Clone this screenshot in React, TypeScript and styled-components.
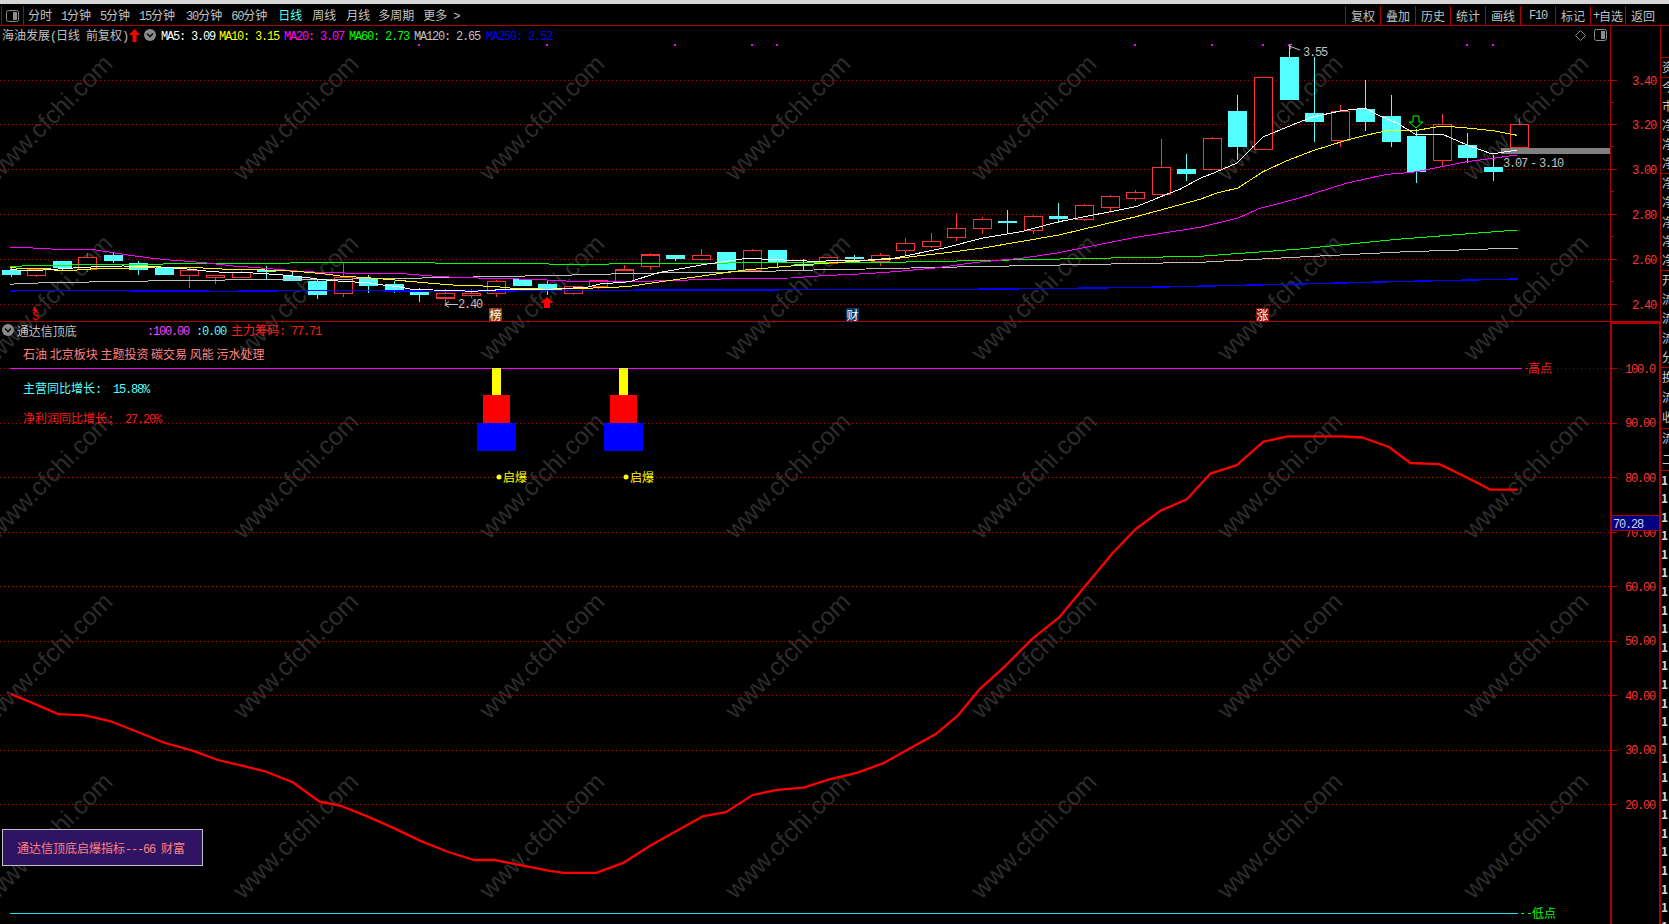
import React from "react";
import styled, { createGlobalStyle } from "styled-components";

const Global = createGlobalStyle`
  html, body { margin: 0; padding: 0; background: #000; }
  body { font-family: "Noto Sans CJK SC", "Liberation Sans", sans-serif; font-size: 12px; }
`;

const RED_LINE = "#b00000";
const UP = "#ff3232";
const DOWN = "#54ffff";

const Page = styled.div`
  width: 1669px;
  height: 924px;
  background: #000;
  overflow: hidden;
  display: flex;
  flex-direction: column;
`;
const WindowEdge = styled.div`
  height: 4px;
  flex: none;
  background: #d6d6d6;
`;
const Toolbar = styled.div`
  height: 21px;
  flex: none;
  display: flex;
  align-items: center;
  border-bottom: 1px solid ${RED_LINE};
  color: #c0c0c0;
`;
const ToggleCell = styled.div`
  align-self: stretch;
  margin: 2px 0 0 1px;
  width: 21px;
  flex: none;
  border-left: 1px solid ${RED_LINE};
  border-right: 1px solid ${RED_LINE};
  display: flex;
  align-items: center;
  justify-content: center;
`;
const Period = styled.span<{ $ml: number; $active?: boolean }>`
  margin-left: ${(p) => p.$ml}px;
  white-space: nowrap;
  color: ${(p) => (p.$active ? DOWN : "#c0c0c0")};
`;
const ToolGroup = styled.div`
  margin-left: auto;
  padding-right: 9px;
  display: flex;
  align-self: stretch;
`;
const ToolButton = styled.div`
  width: 35px;
  box-sizing: border-box;
  margin-top: 2px;
  border-left: 1px solid ${RED_LINE};
  display: flex;
  align-items: center;
  justify-content: center;
  white-space: nowrap;
`;
const Body = styled.div`
  flex: 1;
  min-height: 0;
  display: flex;
`;
const Panes = styled.div`
  width: 1661px;
  flex: none;
  display: flex;
  flex-direction: column;
`;
const PriceRow = styled.div`
  height: 296px;
  flex: none;
  display: flex;
  border-bottom: 1px solid ${RED_LINE};
  box-sizing: border-box;
`;
const IndicatorRow = styled.div`
  flex: 1;
  min-height: 0;
  display: flex;
`;
const ChartPane = styled.div`
  position: relative;
  width: 1610px;
  flex: none;
  overflow: hidden;
`;
const ChartSvg = styled.svg`
  display: block;
  width: 1610px;
  height: 100%;
`;
const Axis = styled.div<{ $heavy?: boolean }>`
  position: relative;
  flex: 1;
  box-sizing: border-box;
  border-left: ${(p) => (p.$heavy ? 2 : 1)}px solid ${RED_LINE};
  border-right: ${(p) => (p.$heavy ? 2 : 1)}px solid ${RED_LINE};
  border-top: ${(p) => (p.$heavy ? `2px solid ${RED_LINE}` : "none")};
`;
const AxisSvg = styled.svg`
  position: absolute;
  left: 0;
  top: 0;
  width: 8px;
  height: 100%;
`;
const AxisValue = styled.span<{ $top: number }>`
  position: absolute;
  right: 4px;
  top: ${(p) => p.$top}px;
  transform: translateY(-50%);
  color: ${UP};
  line-height: 14px;
`;
const LastValue = styled.div<{ $top: number }>`
  position: absolute;
  left: 0;
  right: 0;
  top: ${(p) => p.$top}px;
  height: 16px;
  box-sizing: border-box;
  background: #000080;
  border-top: 1px solid ${RED_LINE};
  border-bottom: 1px solid ${RED_LINE};
  color: #d0d0e8;
  line-height: 14px;
  padding-left: 1px;
`;
const Strip = styled.div`
  flex: 1;
  min-width: 0;
  overflow: hidden;
  padding-top: 5px;
`;
const StripSection = styled.div<{ $h: number }>`
  height: ${(p) => p.$h}px;
  box-sizing: border-box;
  border-bottom: 1px solid ${RED_LINE};
  display: flex;
  flex-direction: column;
  justify-content: space-around;
  overflow: hidden;
`;
const StripRow = styled.div`
  height: 18.6px;
  line-height: 18.6px;
  flex: none;
  padding-left: 1px;
  color: #c8c8c8;
  white-space: nowrap;
  overflow: hidden;
`;
const StripOne = styled(StripRow)`
  padding-left: 0;
  color: #d8d8d8;
  font-weight: 700;
`;
const Legend = styled.div`
  position: absolute;
  left: 2px;
  top: 2px;
  height: 14px;
  display: flex;
  align-items: center;
  white-space: nowrap;
  color: #c0c0c0;
`;
const LegendTitle = styled.span`
  width: 127px;
  flex: none;
`;
const LegendIcon = styled.svg`
  flex: none;
  display: block;
`;
const MaItem = styled.span<{ $color: string; $ml: number }>`
  color: ${(p) => p.$color};
  margin-left: ${(p) => p.$ml}px;
`;
const PaneIcons = styled.div`
  position: absolute;
  right: 3px;
  top: 3px;
  display: flex;
  gap: 8px;
  align-items: center;
`;
const ChartLabel = styled.span<{ $x: number; $y: number; $color: string }>`
  position: absolute;
  left: ${(p) => p.$x}px;
  top: ${(p) => p.$y}px;
  transform: translateY(-50%);
  color: ${(p) => p.$color};
  white-space: pre;
  line-height: 14px;
`;
const Badge = styled.span<{ $x: number; $y: number; $bg: string }>`
  position: absolute;
  left: ${(p) => p.$x}px;
  top: ${(p) => p.$y}px;
  width: 13px;
  height: 13px;
  background: ${(p) => p.$bg};
  color: #fff;
  font-size: 12px;
  line-height: 13px;
  text-align: center;
`;
const IndicatorHead = styled.div`
  position: absolute;
  left: 2px;
  top: 1px;
  height: 14px;
  display: flex;
  align-items: center;
  white-space: pre;
  color: #c0c0c0;
`;
const HeadValue = styled.span<{ $color: string; $x: number }>`
  position: absolute;
  left: ${(p) => p.$x}px;
  color: ${(p) => p.$color};
`;
const ConceptLine = styled.div`
  position: absolute;
  left: 23px;
  top: 25px;
  color: #ff8080;
  white-space: pre;
  line-height: 14px;
`;
const SignNote = styled.div`
  position: absolute;
  left: 2px;
  bottom: 58px;
  width: 201px;
  height: 37px;
  box-sizing: border-box;
  background: #301464;
  border: 1px solid #c0c0c0;
  color: #ff8080;
  padding-left: 14px;
  line-height: 35px;
  white-space: pre;
`;
const Latin = styled.span`
  font-family: "Liberation Mono", monospace;
  letter-spacing: -1.2px;
  white-space: pre;
`;
const RangeText = styled(Latin)`
  word-spacing: -3px;
`;

const Mixed = ({ text }: { text: string }) => (
  <>
    {text.split(/([\x20-\x7e]+)/).map((part, i) =>
      i % 2 === 1 ? <Latin key={i}>{part}</Latin> : <React.Fragment key={i}>{part}</React.Fragment>
    )}
  </>
);

const cx = (i: number) => 10.5 + 25.56 * i;

type Candle = [0 | 1, number, number, number, number];
// [isUp, bodyTop, bodyBottom, wickTop, wickBottom]
const candles: Candle[] = [
  [0, 270, 275, 267.7, 277],
  [1, 269, 275.7, 269, 277],
  [0, 261, 268.3, 261, 270.3],
  [1, 257.3, 269.3, 253, 271.7],
  [0, 255, 261, 253, 262.7],
  [0, 263.3, 270, 261.3, 275],
  [0, 267.7, 275, 267.7, 275],
  [1, 270.3, 275.7, 268.3, 288],
  [1, 275.3, 277.7, 275.3, 284],
  [1, 272.7, 277.7, 271.3, 277.7],
  [0, 270, 272.3, 266, 279],
  [0, 275.7, 281, 271, 281],
  [0, 281, 295, 280, 299],
  [1, 277.3, 293.7, 262, 297],
  [0, 278.7, 285.7, 275, 292.7],
  [0, 284.3, 290, 281, 293.3],
  [0, 291, 295, 288.3, 302],
  [1, 293.3, 298, 289, 306],
  [1, 293.3, 295.7, 289.3, 298.3],
  [1, 281.3, 293.3, 280, 296.7],
  [0, 279, 286, 279, 286],
  [0, 284, 290, 280, 295],
  [1, 286.7, 293.7, 286.7, 294.7],
  [1, 281, 286.7, 280, 289],
  [1, 270, 281.7, 265, 281.7],
  [1, 255, 266.7, 253, 270],
  [0, 255, 259, 255, 260.7],
  [1, 255.3, 259.7, 249, 261],
  [0, 252, 270, 252, 270],
  [1, 250.3, 270.7, 249.3, 270.7],
  [0, 250, 263.3, 250, 268],
  [0, 264, 266, 259.3, 270],
  [1, 257.3, 263, 257.3, 263],
  [0, 257.3, 259.3, 255, 263],
  [1, 255.3, 261.7, 253, 266],
  [1, 243.3, 250.7, 238, 255],
  [1, 241.3, 246.7, 233, 248],
  [1, 228.3, 237.7, 213, 241],
  [1, 219.3, 228.7, 217, 234],
  [0, 221, 223, 210, 233],
  [1, 216.3, 230.7, 215, 234],
  [0, 216, 219, 203, 222.7],
  [1, 205.3, 219.7, 204, 220.7],
  [1, 196.3, 207.7, 195, 212.3],
  [1, 192.3, 198.3, 190, 200.7],
  [1, 167.3, 194.7, 139, 194.7],
  [0, 169, 174, 154, 181],
  [1, 138.3, 169.7, 137, 169.7],
  [0, 111, 147, 95, 160],
  [1, 77.3, 149.7, 77.3, 149.7],
  [0, 57, 100, 46.7, 100],
  [0, 113, 122, 57, 142],
  [1, 111.3, 140.7, 105, 146.7],
  [0, 109, 122, 80, 131],
  [0, 116, 142, 95, 147],
  [0, 136, 172, 129, 182.7],
  [1, 124.3, 160.7, 114, 166],
  [0, 145, 158, 133, 163],
  [0, 167, 172, 155, 180.7],
  [1, 124.3, 147.7, 119, 147.7],
];

const ma5 = "10,269.3 17,270 43,270 73,268 97,266.7 123,266 157,266.7 187,269 213,271.7 233,272.7 253,273 280,274.7 300,276.7 317,279 333,280.7 350,281.7 367,282.7 383,285 400,287 413,289.7 433,290 457,290.7 473,291.3 513,289 553,289 587,287.3 600,284 630,281.7 657,273 707,264 720,262.3 747,258.3 784,260 814,261.3 868,260 895,258 944,248 983,238 1021,231.7 1059,221.7 1097,214.3 1136,206.7 1170,193 1180,189.3 1200,178.3 1213,173.3 1237,163 1253,146.7 1263,137 1280,130 1297,123 1313,117 1340,111 1365,108 1380,116 1397,123 1415,134 1442,134 1467,145 1492,154 1517,150";
const ma10 = "10,267.7 30,268.7 50,268.7 55,270.3 73,270.3 100,268.3 125,268.3 155,267 203,268 227,269.3 280,270.3 300,271.7 323,273.7 340,276 367,277.7 387,279.3 413,281.7 440,284 457,285.3 483,286 500,287 513,288.3 553,289.3 593,288 627,286.7 673,280 745,270 814,264 891,259 944,253 983,248 1059,235 1136,216.7 1200,199.3 1217,193 1238,188 1263,171.7 1287,160.7 1313,150.7 1347,140 1367,135 1390,130 1413,131 1442,126 1467,128 1493,130.7 1517,135.3";
const ma20 = "10,247.3 43,248.3 55,249.3 92,249.3 100,250.7 117,253.3 133,255.7 150,258 170,260 193,261.7 210,263.3 233,266 253,267.3 273,269 300,271.3 320,272.3 356,273.3 407,274 440,276.7 487,278.3 533,279.3 580,281.7 600,281.7 634,281.7 663,280.7 713,279.3 740,278.3 791,278 822,275.7 866,273.7 895,271.7 935,268 977,262.3 1021,258.3 1059,252.7 1097,245 1136,237.3 1200,227.3 1238,218 1260,208.3 1295,199.3 1347,183 1387,174.3 1413,172.3 1467,161.7 1517,155";
const ma60 = "10,266.3 49,265.3 125,264.3 253,263.3 381,262.3 458,263.3 587,264.3 661,263.3 891,262.3 942,261.3 994,260.3 1045,259.3 1096,258.3 1147,257.3 1200,256.3 1300,249 1397,239.3 1517,230";
const ma120 = "10,284.3 23,283.3 74,282.3 125,281.3 202,280.3 279,279.3 330,279.3 407,278.3 458,277.3 510,276.3 560,275.3 600,274.3 636,273.3 713,272.3 765,271.3 814,270 866,269 942,267.3 994,266.3 1045,265.3 1096,264.3 1147,263.3 1200,262.3 1300,257 1400,252 1518,248";
const ma250 = "10,291.3 23,290.3 228,291.3 330,290.3 433,291.3 600,290.3 969,289.3 1071,288.3 1148,287.3 1300,284 1400,281.5 1518,279";

const mainRaw: [number, number][] = [
  [10, 652], [32, 661], [55, 671], [80, 672], [105, 678], [130, 688], [155, 698], [180, 705], [205, 714], [230, 720],
  [250, 725], [275, 735], [300, 753], [320, 757], [345, 767], [370, 778], [395, 790], [420, 800], [445, 808], [465, 808],
  [490, 813], [515, 818], [530, 820], [560, 820], [585, 811], [610, 795], [635, 781], [660, 767], [682, 763], [707, 747],
  [730, 742], [755, 740], [780, 732], [805, 726], [830, 717], [855, 703], [880, 689], [900, 672], [920, 648], [945, 625],
  [970, 600], [995, 580], [1020, 550], [1045, 520], [1067, 497], [1090, 480], [1115, 469], [1137, 445], [1162, 437],
  [1187, 415], [1210, 410], [1235, 410], [1260, 410], [1280, 411], [1305, 420], [1325, 435], [1352, 436], [1375, 447],
  [1400, 460], [1426, 460],
];
const mainLine = mainRaw.map(([x, y]) => `${(x * 1.0644).toFixed(1)},${(y * 1.0644).toFixed(1)}`).join(" ");

const markDots = [16, 21, 26, 29, 30, 44, 47, 49, 50, 57, 58];
const wmX = [50, 296, 542, 788, 1034, 1280, 1526];
const wmY = [118, 298, 476, 656, 836];

const Watermarks = () => (
  <g fill="#2c2c2c" fontFamily='"Liberation Sans", sans-serif' fontSize="25" textAnchor="middle">
    {wmY.map((y) =>
      wmX.map((x) => (
        <text key={`${x}-${y}`} x={x} y={y + 8} transform={`rotate(-45 ${x} ${y})`}>
          www.cfchi.com
        </text>
      ))
    )}
  </g>
);

const Dotted = ({ y, x1 = 0, x2 = 1610 }: { y: number; x1?: number; x2?: number }) => (
  <line x1={x1} x2={x2} y1={y} y2={y} stroke="#a80000" strokeDasharray="1 3" shapeRendering="crispEdges" />
);

const Poly = ({ pts, color, w = 1 }: { pts: string; color: string; w?: number }) => (
  <polyline points={pts} fill="none" stroke={color} strokeWidth={w} shapeRendering="crispEdges" />
);

const PanelGlyph = () => (
  <svg width="13" height="12" viewBox="0 0 13 12">
    <rect x="0.5" y="0.5" width="12" height="11" rx="2" fill="none" stroke="#8c8c8c" />
    <rect x="7" y="2" width="4" height="8" fill="#8c8c8c" />
  </svg>
);

const Chevron = () => (
  <LegendIcon width="12" height="12" viewBox="0 0 12 12">
    <circle cx="6" cy="6" r="6" fill="#8a8a8a" />
    <path d="M3 4.5 L6 7.5 L9 4.5" fill="none" stroke="#111" strokeWidth="1.6" />
  </LegendIcon>
);

const maLegend = [
  { t: "MA5: 3.09", c: "#ffffff", ml: 5 },
  { t: "MA10: 3.15", c: "#ffff00", ml: 4 },
  { t: "MA20: 3.07", c: "#ff00ff", ml: 5 },
  { t: "MA60: 2.73", c: "#00ff00", ml: 5 },
  { t: "MA120: 2.65", c: "#c0c0c0", ml: 5 },
  { t: "MA250: 2.52", c: "#0000ff", ml: 6 },
];

const periods = [
  { t: "分时", ml: 4 },
  { t: "1分钟", ml: 9 },
  { t: "5分钟", ml: 9 },
  { t: "15分钟", ml: 9 },
  { t: "30分钟", ml: 11 },
  { t: "60分钟", ml: 9 },
  { t: "日线", ml: 11, active: true },
  { t: "周线", ml: 10 },
  { t: "月线", ml: 10 },
  { t: "多周期", ml: 8 },
  { t: "更多 >", ml: 9 },
];
const tools = ["复权", "叠加", "历史", "统计", "画线", "F10", "标记", "+自选", "返回"];

const priceTicks = [80.5, 124.5, 169.5, 214.5, 259.5, 304.5];
const priceLabels = ["3.40", "3.20", "3.00", "2.80", "2.60", "2.40"];
const indTicks = [368.5, 423, 477.5, 532, 586.5, 641, 695.5, 750, 804.5];
const indLabels = ["100.0", "90.00", "80.00", "70.00", "60.00", "50.00", "40.00", "30.00", "20.00"];

const stripSections: { h: number; rows: string[] }[] = [
  { h: 26.5, rows: [] },
  { h: 20, rows: ["资"] },
  { h: 96.5, rows: ["今", "市", "净", "净", "净"] },
  { h: 97, rows: ["净", "净", "净", "净", "净"] },
  { h: 96.5, rows: ["开", "流", "流", "流", "分"] },
  { h: 61, rows: ["换", "流", "收"] },
  { h: 42, rows: ["流", "二"] },
];
const ones = Array.from({ length: 26 }, (_, i) => i);

export default function App() {
  return (
    <Page>
      <Global />
      <WindowEdge />
      <Toolbar>
        <ToggleCell>
          <PanelGlyph />
        </ToggleCell>
        {periods.map((p) => (
          <Period key={p.t} $ml={p.ml} $active={p.active}>
            <Mixed text={p.t} />
          </Period>
        ))}
        <ToolGroup>
          {tools.map((t) => (
            <ToolButton key={t}>
              <Mixed text={t} />
            </ToolButton>
          ))}
        </ToolGroup>
      </Toolbar>
      <Body>
        <Panes>
          <PriceRow>
            <ChartPane>
              <ChartSvg viewBox="0 26 1610 295" preserveAspectRatio="none">
                <Watermarks />
                {priceTicks.map((y) => (
                  <Dotted key={y} y={y} />
                ))}
                {markDots.map((i) => (
                  <rect key={i} x={Math.round(cx(i)) - 1} y={44} width={2} height={2} fill="#ff00ff" />
                ))}
                <rect x={1501} y={148} width={109} height={6} fill="#808080" />
                {candles.map(([up, top, bottom, wt, wb], i) => {
                  const x = Math.round(cx(i)) + 0.5;
                  const color = up ? UP : DOWN;
                  return (
                    <g key={i} shapeRendering="crispEdges">
                      <line x1={x} x2={x} y1={wt} y2={wb} stroke={color} />
                      {up ? (
                        <rect x={x - 9} y={top} width={18} height={bottom - top} fill="#000" stroke={color} strokeWidth={1.2} />
                      ) : (
                        <rect x={x - 9.5} y={top} width={19} height={bottom - top} fill={color} />
                      )}
                    </g>
                  );
                })}
                <Poly pts={ma250} color="#0000ff" w={1.4} />
                <Poly pts={ma120} color="#c0c0c0" />
                <Poly pts={ma60} color="#00ff00" />
                <Poly pts={ma20} color="#ff00ff" />
                <Poly pts={ma10} color="#ffff00" />
                <Poly pts={ma5} color="#ffffff" />
                <polygon points="1413,116 1419,116 1419,122 1423,122 1416,128 1409,122 1413,122" fill="#000" stroke="#00ff00" />
                <polygon points="547,297 553.5,303 550,303 550,308 544,308 544,303 540.5,303" fill="#ff0000" />
                <polygon points="35,307 38,311 32,311" fill="#ff0000" />
                <path d="M1289 46 L1300 50 M1289 46 L1292 44 M1289 46 L1291 49" stroke="#c0c0c0" fill="none" />
                <path d="M445 304.5 L458 304.5 M445 304.5 L449 301.5 M445 304.5 L449 307.5" stroke="#c0c0c0" fill="none" />
              </ChartSvg>
              <Legend>
                <LegendTitle>
                  <Mixed text="海油发展(日线 前复权)" />
                </LegendTitle>
                <LegendIcon width="11" height="13" viewBox="0 0 11 13">
                  <polygon points="5.5,0 11,6 7.5,6 7.5,13 3.5,13 3.5,6 0,6" fill="#ff0000" />
                </LegendIcon>
                <MaItem $color="transparent" $ml={4} />
                <Chevron />
                {maLegend.map((m) => (
                  <MaItem key={m.t} $color={m.c} $ml={m.ml}>
                    <Latin>{m.t}</Latin>
                  </MaItem>
                ))}
              </Legend>
              <PaneIcons>
                <svg width="11" height="11" viewBox="0 0 11 11">
                  <path d="M5.5 0.5 L10.5 5.5 L5.5 10.5 L0.5 5.5 Z" fill="none" stroke="#8c8c8c" />
                </svg>
                <PanelGlyph />
              </PaneIcons>
              <ChartLabel $x={1303} $y={26} $color="#c0c0c0">
                <Latin>3.55</Latin>
              </ChartLabel>
              <ChartLabel $x={1503} $y={137} $color="#c0c0c0">
                <RangeText>3.07 - 3.10</RangeText>
              </ChartLabel>
              <ChartLabel $x={458} $y={278} $color="#c0c0c0">
                <Latin>2.40</Latin>
              </ChartLabel>
              <ChartLabel $x={32} $y={290} $color="#ff0000">
                <Latin>S</Latin>
              </ChartLabel>
              <Badge $x={489} $y={282} $bg="#8b4513">榜</Badge>
              <Badge $x={846} $y={282} $bg="#003a6b">财</Badge>
              <Badge $x={1256} $y={282} $bg="#8b1010">涨</Badge>
            </ChartPane>
            <Axis>
              <AxisSvg viewBox="0 26 8 295" preserveAspectRatio="none">
                {priceTicks.map((y) => (
                  <line key={y} x1={0} x2={6} y1={y} y2={y} stroke="#b00000" shapeRendering="crispEdges" />
                ))}
                {priceTicks.map((y) => (
                  <line key={y} x1={0} x2={3} y1={y + 22.4} y2={y + 22.4} stroke="#b00000" shapeRendering="crispEdges" />
                ))}
              </AxisSvg>
              {priceLabels.map((l, i) => (
                <AxisValue key={l} $top={priceTicks[i] - 26}>
                  <Latin>{l}</Latin>
                </AxisValue>
              ))}
            </Axis>
          </PriceRow>
          <IndicatorRow>
            <ChartPane>
              <ChartSvg viewBox="0 322 1610 602" preserveAspectRatio="none">
                <Watermarks />
                {indTicks.slice(1).map((y) => (
                  <Dotted key={y} y={y} />
                ))}
                <Dotted y={368.5} x1={0} x2={10} />
                <Dotted y={368.5} x1={1553} />
                <line x1={10} x2={1522} y1={368.5} y2={368.5} stroke="#ff00ff" shapeRendering="crispEdges" />
                <line x1={1525} x2={1528} y1={368.5} y2={368.5} stroke="#ff0000" shapeRendering="crispEdges" />
                <line x1={10} x2={1518} y1={913.5} y2={913.5} stroke="#20e0e8" shapeRendering="crispEdges" />
                <line x1={1521} x2={1524} y1={913.5} y2={913.5} stroke="#00ff00" shapeRendering="crispEdges" />
                <line x1={1528} x2={1531} y1={913.5} y2={913.5} stroke="#00ff00" shapeRendering="crispEdges" />
                <g shapeRendering="crispEdges">
                  <rect x={492} y={368} width={9} height={27} fill="#ffff00" />
                  <rect x={483} y={395} width={27} height={28} fill="#ff0000" />
                  <rect x={477} y={423} width={39} height={28} fill="#0000ff" />
                  <rect x={619} y={368} width={9} height={27} fill="#ffff00" />
                  <rect x={610} y={395} width={27} height={28} fill="#ff0000" />
                  <rect x={604} y={423} width={39} height={28} fill="#0000ff" />
                </g>
                <circle cx={499} cy={477} r={2.5} fill="#ffff00" />
                <circle cx={626} cy={477} r={2.5} fill="#ffff00" />
                <polyline points={mainLine} fill="none" stroke="#ff0000" strokeWidth={2.3} strokeLinejoin="round" />
              </ChartSvg>
              <IndicatorHead>
                <Chevron />
                <span>&nbsp;</span>
                <span>通达信顶底</span>
                <HeadValue $color="#ff40ff" $x={145}>
                  <Latin>:100.00</Latin>
                </HeadValue>
                <HeadValue $color="#54ffff" $x={194}>
                  <Latin>:0.00</Latin>
                </HeadValue>
                <HeadValue $color="#ff1a1a" $x={229}>
                  主力筹码<Latin>: 77.71</Latin>
                </HeadValue>
              </IndicatorHead>
              <ConceptLine>石油 北京板块 主题投资 碳交易 风能 污水处理</ConceptLine>
              <ChartLabel $x={23} $y={67} $color="#54ffff">
                <Mixed text="主营同比增长:  15.88%" />
              </ChartLabel>
              <ChartLabel $x={23} $y={97} $color="#ff1a1a">
                <Mixed text="净利润同比增长:  27.20%" />
              </ChartLabel>
              <ChartLabel $x={503} $y={155} $color="#ffff00">启爆</ChartLabel>
              <ChartLabel $x={630} $y={155} $color="#ffff00">启爆</ChartLabel>
              <ChartLabel $x={1528} $y={46} $color="#ff1a1a">高点</ChartLabel>
              <ChartLabel $x={1532} $y={591} $color="#00ff00">低点</ChartLabel>
              <SignNote>
                <Mixed text="通达信顶底启爆指标---66 财富" />
              </SignNote>
            </ChartPane>
            <Axis $heavy>
              <AxisSvg viewBox="0 324 8 600" preserveAspectRatio="none">
                {indTicks.map((y) => (
                  <line key={y} x1={0} x2={5} y1={y} y2={y} stroke="#b00000" shapeRendering="crispEdges" />
                ))}
              </AxisSvg>
              {indLabels.map((l, i) => (
                <AxisValue key={l} $top={indTicks[i] - 324 + (l === "70.00" ? 1 : 0)}>
                  <Latin>{l}</Latin>
                </AxisValue>
              ))}
              <LastValue $top={191}>
                <Latin>70.28</Latin>
              </LastValue>
            </Axis>
          </IndicatorRow>
        </Panes>
        <Strip>
          {stripSections.map((s, i) => (
            <StripSection key={i} $h={s.h}>
              {s.rows.map((r, j) => (
                <StripRow key={j}>{r}</StripRow>
              ))}
            </StripSection>
          ))}
          {ones.map((i) => (
            <StripOne key={i}>1</StripOne>
          ))}
        </Strip>
      </Body>
    </Page>
  );
}
